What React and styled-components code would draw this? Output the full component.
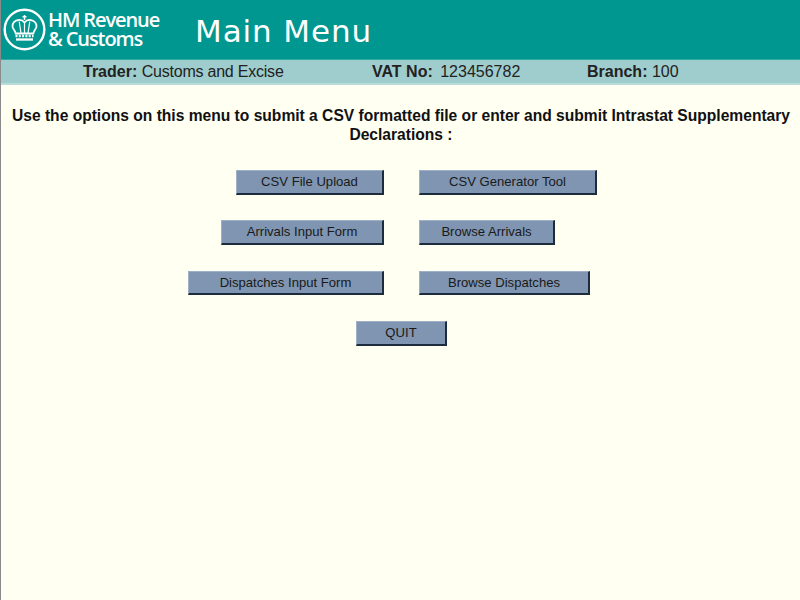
import styled, { createGlobalStyle } from 'styled-components'

const GlobalStyle = createGlobalStyle`
  html, body {
    margin: 0;
    padding: 0;
    background: #fffff2;
  }
`

const Page = styled.div`
  width: 800px;
  height: 600px;
  box-sizing: border-box;
  border-left: 1px solid #8a8a8a;
  background: #fffff2;
  font-family: "Liberation Sans", Arial, sans-serif;
  overflow: hidden;
`

const Banner = styled.header`
  display: flex;
  align-items: center;
  height: 59px;
  background: #009790;
  border-bottom: 1px solid #34a8a2;
  color: #fff;
`

const Logo = styled.div`
  display: flex;
  align-items: center;
  gap: 2px;
  margin-left: 2px;
  width: 192px;
`

const LogoText = styled.div`
  margin-top: -2px;
  font-family: "Open Sans", sans-serif;
  font-weight: 600;
  font-size: 20px;
  line-height: 19px;
  letter-spacing: -1.1px;
  white-space: nowrap;
`

const Title = styled.h1`
  margin: 2px 0 0;
  font-family: "DejaVu Sans", sans-serif;
  font-weight: 400;
  font-size: 31px;
  letter-spacing: 0.9px;
`

const InfoBar = styled.div`
  display: flex;
  align-items: center;
  height: 23px;
  padding-left: 82px;
  background: #9fcccc;
  border-bottom: 2px solid #b8dcd8;
  font-size: 16px;
  color: #222;
`

const InfoItem = styled.div`
  width: ${(p) => p.$width}px;
  white-space: nowrap;
`

const Value = styled.span`
  margin-left: ${(p) => p.$gap || 0}px;
  letter-spacing: ${(p) => p.$tight || 0}px;
`

const Intro = styled.p`
  margin: 21px 0 0;
  padding-left: 1px;
  font-size: 15.6px;
  line-height: 19px;
  font-weight: 700;
  text-align: center;
  color: #111;
`

const Menu = styled.div`
  display: grid;
  grid-template-columns: 1fr 1fr;
  column-gap: 35px;
  row-gap: 25.9px;
  margin-top: 26px;
  padding-left: 1px;
`

const Button = styled.button`
  box-sizing: border-box;
  justify-self: ${(p) => p.$align};
  grid-column: ${(p) => (p.$wide ? '1 / -1' : 'auto')};
  width: ${(p) => p.$width}px;
  height: 24.5px;
  padding: 0 0 1px 1px;
  border: 1px solid #9fb0c6;
  border-right: 2px solid #1d2c3d;
  border-bottom: 2px solid #1d2c3d;
  background: #7f95b1;
  font-family: "Liberation Sans", Arial, sans-serif;
  font-size: 13.1px;
  color: #1a1a1a;
`

const Crest = () => (
  <svg width="43" height="43" viewBox="0 0 43 43" fill="none">
    <circle cx="21.5" cy="21.5" r="19.8" stroke="#fff" strokeWidth="2.4" />
    <path d="M21.5 7v5M19.5 8.8h4" stroke="#fff" strokeWidth="1.5" />
    <path
      d="M21.5 14.5c-2-2.6-5.6-3-8.4-1.8-3.6 1.6-4.6 5.4-2.6 8.400.9 1.300 1.800 2.700 2.200 4.400h17.600c.4-1.700 1.300-3.100 2.200-4.400 2-3 1-6.800-2.600-8.400-2.800-1.200-6.400-.8-8.400 1.800z"
      stroke="#fff"
      strokeWidth="1.8"
    />
    <path d="M21.5 14.500v10.500M16.200 13.500l1.800 11.500M26.800 13.500L25 25" stroke="#fff" strokeWidth="1.2" />
    <path d="M12.500 28h18" stroke="#fff" strokeWidth="2.3" strokeDasharray="2 1.3" />
    <path d="M13 31.500h17" stroke="#fff" strokeWidth="2.3" />
  </svg>
)

const buttons = [
  { label: 'CSV File Upload', width: 148, align: 'end' },
  { label: 'CSV Generator Tool', width: 178, align: 'start' },
  { label: 'Arrivals Input Form', width: 163, align: 'end' },
  { label: 'Browse Arrivals', width: 136, align: 'start' },
  { label: 'Dispatches Input Form', width: 196, align: 'end' },
  { label: 'Browse Dispatches', width: 171, align: 'start' },
  { label: 'QUIT', width: 91, align: 'center', wide: true },
]

function App() {
  return (
    <Page>
      <GlobalStyle />
      <Banner>
        <Logo>
          <Crest />
          <LogoText>
            HM Revenue
            <br />& Customs
          </LogoText>
        </Logo>
        <Title>Main Menu</Title>
      </Banner>
      <InfoBar>
        <InfoItem $width={289}><b>Trader:</b> <Value $tight={-0.22}>Customs and Excise</Value></InfoItem>
        <InfoItem $width={215}><b>VAT No:</b> <Value $gap={3}>123456782</Value></InfoItem>
        <InfoItem $width={100}><b>Branch:</b> <Value>100</Value></InfoItem>
      </InfoBar>
      <Intro>
        Use the options on this menu to submit a CSV formatted file or enter and submit Intrastat Supplementary
        <br />
        Declarations :
      </Intro>
      <Menu>
        {buttons.map((b) => (
          <Button key={b.label} $width={b.width} $align={b.align} $wide={b.wide}>
            {b.label}
          </Button>
        ))}
      </Menu>
    </Page>
  )
}

export default App
